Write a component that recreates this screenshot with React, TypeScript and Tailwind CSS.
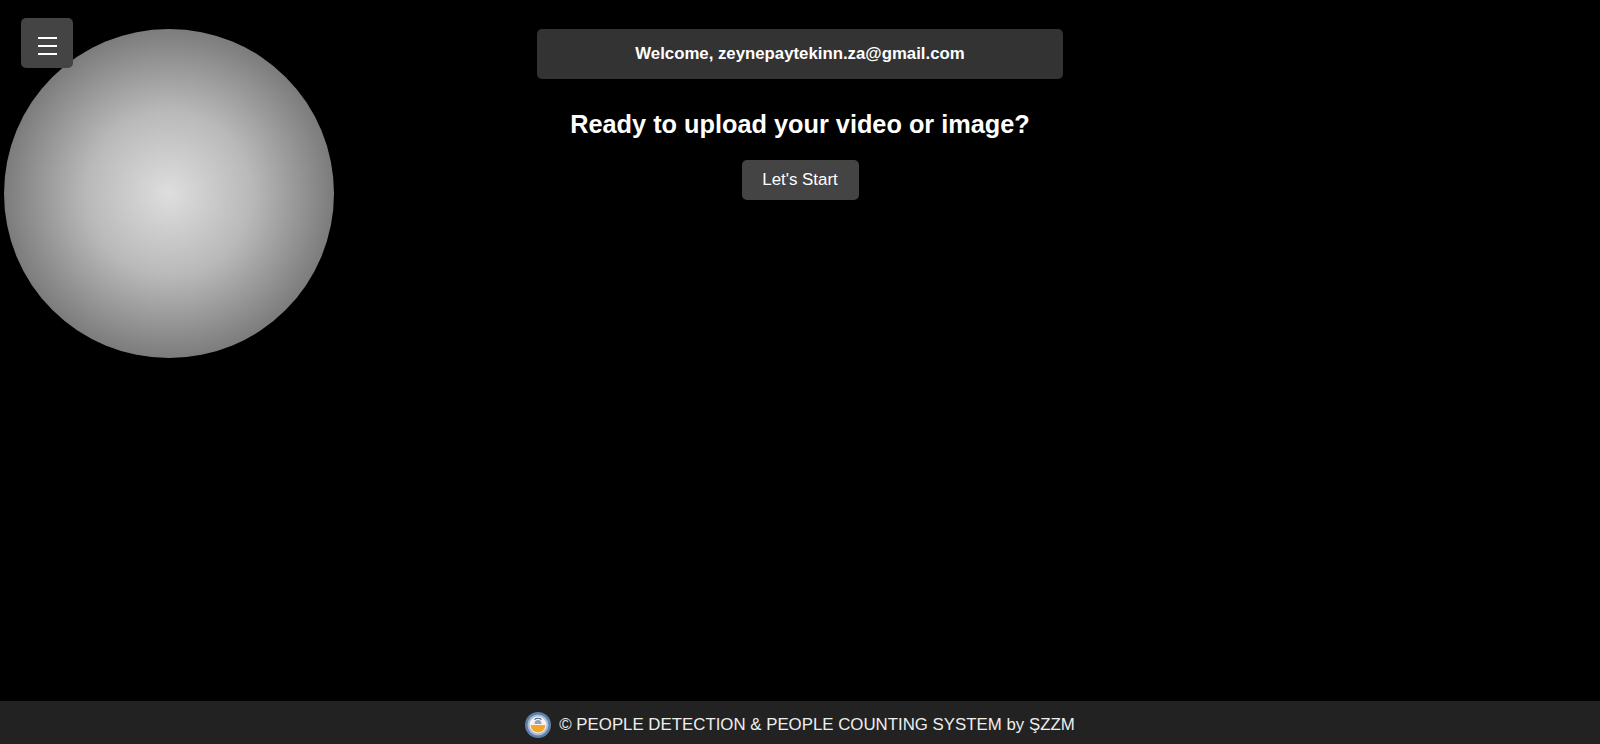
import React from 'react';

const FooterLogo = () => (
  <svg viewBox="0 0 26 26" className="w-[26px] h-[26px] shrink-0">
    <circle cx="13" cy="13" r="13" fill="#5f7fa8" />
    <circle cx="13" cy="13" r="10.5" fill="#a9bdd6" />
    <circle cx="13" cy="13" r="8.5" fill="#f6f4ec" />
    <path d="M5.6 13 L20.4 13 A7.4 7.4 0 0 1 5.6 13 Z" fill="#f2a62e" />
    <path d="M9.5 12 A3.5 4 0 0 1 16.5 12 Z" fill="#8ea4bf" />
    <path d="M9.5 7.5 A6 6 0 0 1 16.5 7.5" fill="none" stroke="#3f5f86" strokeWidth="1.2" />
  </svg>
);

export default function App() {
  return (
    <div className="relative flex flex-col h-[744px] overflow-hidden bg-black text-white font-['Liberation_Sans',Arial,sans-serif]">
      {/* Glowing sphere */}
      <div className="absolute left-[4px] top-[29px] w-[330px] h-[329px] rounded-full bg-[radial-gradient(circle_closest-side,#dedede_0%,#b9b9b9_50%,#7c7c7c_100%)]" />

      {/* Menu button */}
      <button className="absolute left-[21px] top-[18px] w-[52px] h-[50px] rounded-[5px] bg-[#444] flex flex-col items-center justify-center gap-[6px] pt-[6px]">
        <span className="block w-[19px] h-[2px] bg-white" />
        <span className="block w-[19px] h-[2px] bg-white" />
        <span className="block w-[19px] h-[2px] bg-white" />
      </button>

      {/* Main content */}
      <main className="flex-1 flex flex-col items-center pt-[29px]">
        <div className="w-[526px] h-[50px] rounded-[5px] bg-[#333] flex items-center justify-center pb-[1px] text-[16.8px] font-bold">
          Welcome, zeynepaytekinn.za@gmail.com
        </div>
        <h2 className="mt-[28px] text-[25.3px] leading-[34px] font-bold">
          Ready to upload your video or image?
        </h2>
        <button className="mt-[19px] w-[117px] h-[40px] rounded-[5px] bg-[#444] text-[16.9px]">
          Let's Start
        </button>
      </main>

      {/* Footer */}
      <footer className="h-[43px] bg-[#222] flex items-center justify-center gap-[8px] pt-[4px] text-[16.83px] text-[#eee]">
        <FooterLogo />
        <span>© PEOPLE DETECTION &amp; PEOPLE COUNTING SYSTEM by ŞZZM</span>
      </footer>
    </div>
  );
}
